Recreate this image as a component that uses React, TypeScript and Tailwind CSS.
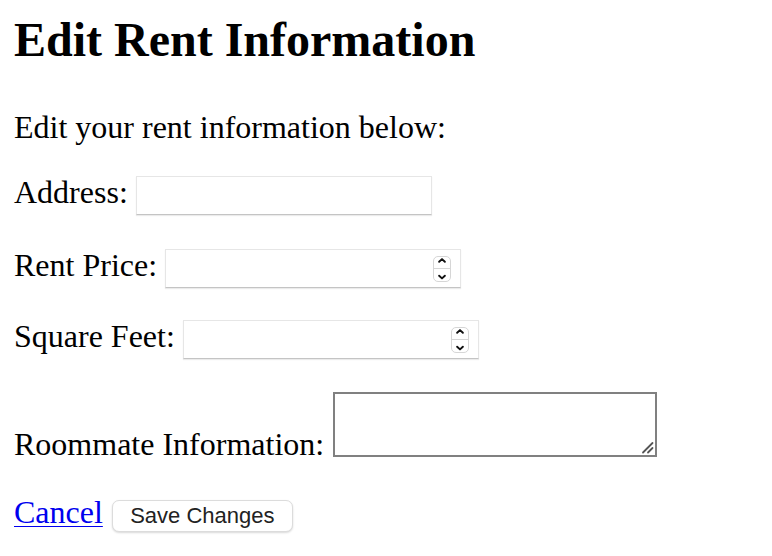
import React from 'react';

const serif = { fontFamily: '"Liberation Serif", "Times New Roman", serif' };

function Spinner() {
  return (
    <div className="mr-[9px] flex h-[26px] w-[18px] flex-col items-center justify-center rounded-[5px] border border-[#d6d6d6] bg-white">
      <svg width="10" height="12" viewBox="0 0 10 12" fill="none">
        <path d="M2 5 L5 2.2 L8 5" stroke="#111" strokeWidth="2" strokeLinecap="round" strokeLinejoin="round" />
      </svg>
      <div className="h-px w-full bg-[#d6d6d6]" />
      <svg width="10" height="12" viewBox="0 0 10 12" fill="none">
        <path d="M2 7 L5 9.8 L8 7" stroke="#111" strokeWidth="2" strokeLinecap="round" strokeLinejoin="round" />
      </svg>
    </div>
  );
}

function TextBox({ number }: { number?: boolean }) {
  return (
    <div className="ml-[8px] mt-[2px] flex h-[39px] w-[296px] items-center border border-[#e6e6e6] border-b-[#c4c4c4] bg-white shadow-[0_1px_1px_rgba(0,0,0,0.08)]">
      <input type="text" className="h-full min-w-0 flex-1 px-2 outline-none" />
      {number && <Spinner />}
    </div>
  );
}

export default function App() {
  return (
    <div className="min-h-screen bg-white pl-[14px] text-black" style={serif}>
      <h1 className="pt-[16px] text-[48px] font-bold leading-[48px]">Edit Rent Information</h1>

      <p className="mt-[45px] text-[32px] leading-[36px]">Edit your rent information below:</p>

      <form className="text-[32px] leading-[36px]">
        <div className="mt-[29px] flex h-[36px] items-start">
          <label>Address:</label>
          <TextBox />
        </div>

        <div className="mt-[37px] flex h-[36px] items-start">
          <label>Rent Price:</label>
          <TextBox number />
        </div>

        <div className="mt-[35px] flex h-[36px] items-start">
          <label>Square Feet:</label>
          <TextBox number />
        </div>

        <div className="mt-[38px] flex h-[70px] items-start">
          <label className="mt-[34px]">Roommate Information:</label>
          <div className="relative ml-[9px] h-[65px] w-[324px] border-2 border-[#808080] bg-white">
            <svg className="absolute bottom-[1px] right-[1px]" width="14" height="14" viewBox="0 0 14 14">
              <path d="M3 12.5 L12.5 3 M8 12.5 L12.5 8" stroke="#555" strokeWidth="1.8" strokeLinecap="round" />
            </svg>
          </div>
        </div>

        <div className="mt-[32px] flex items-start">
          <a href="#" className="text-[#0000ee] underline decoration-1 underline-offset-[3px]">
            Cancel
          </a>
          <button
            type="button"
            className="ml-[9px] mt-[6px] h-[32px] w-[181px] rounded-[7px] border border-[#dcdcdc] bg-white text-[22px] leading-none text-[#222] shadow-[0_1px_2px_rgba(0,0,0,0.15)]"
            style={{ fontFamily: '"Liberation Sans", Arial, sans-serif' }}
          >
            Save Changes
          </button>
        </div>
      </form>
    </div>
  );
}
